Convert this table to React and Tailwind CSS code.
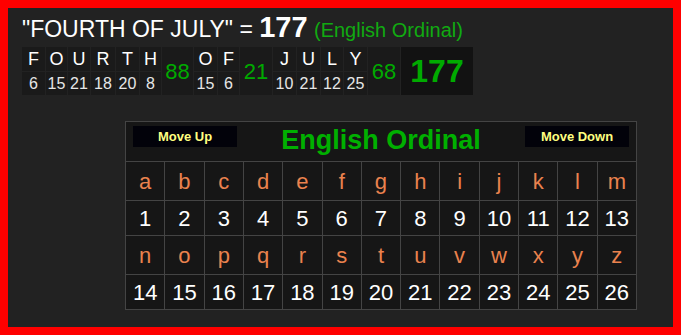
const font = { fontFamily: '"Liberation Sans", Arial, sans-serif' };

const words = [
  { cells: [['F', 6, 23], ['O', 15, 21], ['U', 21, 22], ['R', 18, 24], ['T', 20, 23], ['H', 8, 21]], sum: 88, w: 31 },
  { cells: [['O', 15, 23], ['F', 6, 21]], sum: 21, w: 32 },
  { cells: [['J', 10, 23], ['U', 21, 23], ['L', 12, 22], ['Y', 25, 23]], sum: 68, w: 32 },
];

const rows = [
  'abcdefghijklm'.split(''),
  'nopqrstuvwxyz'.split(''),
];

function WordTable() {
  return (
    <div className="flex gap-px bg-[#222]">
      {words.map((wd, i) => (
        <div key={i} className="flex gap-px">
          {wd.cells.map(([l, n, w], j) => (
            <div key={j} className="flex flex-col gap-px" style={{ width: w }}>
              <div className="h-[24px] bg-[#1a1a1a] text-white text-[18px] leading-[24px] text-center">{l}</div>
              <div className="h-[23px] bg-[#1a1a1a] text-[#e6e6e6] text-[16px] leading-[23px] text-center">{n}</div>
            </div>
          ))}
          <div className="h-[48px] bg-[#1a1a1a] text-[#00aa00] text-[22px] flex items-center justify-center" style={{ width: wd.w }}>{wd.sum}</div>
        </div>
      ))}
      <div className="w-[72px] h-[48px] bg-[#121212] text-[#00aa00] text-[32px] font-bold flex items-center justify-center">177</div>
    </div>
  );
}

function Chart() {
  return (
    <div className="w-[512px] border border-[#444] bg-[#161616] ml-[103px] mt-[26px]">
      <div className="h-[40px] flex items-start justify-between px-[7px] pt-[4px] border-b border-[#444]">
        <button className="w-[104px] h-[21px] bg-[#02020a] text-[#ffff80] text-[13px] font-bold">Move Up</button>
        <div className="text-[#00b000] text-[27px] font-bold leading-[30px] -mt-[1px]">English Ordinal</div>
        <button className="w-[104px] h-[21px] bg-[#02020a] text-[#ffff80] text-[13px] font-bold">Move Down</button>
      </div>
      {rows.map((r, ri) => (
        <div key={ri} className={ri === 0 ? 'border-b border-[#444]' : ''}>
          <div className="grid grid-cols-13 gap-px bg-[#444] border-b border-[#444]">
            {r.map((c) => (
              <div key={c} className="h-[38px] bg-[#161616] text-[#ea824e] text-[22px] flex items-center justify-center">{c}</div>
            ))}
          </div>
          <div className="grid grid-cols-13 gap-px bg-[#444]">
            {r.map((c, i) => (
              <div key={c} className="h-[34px] bg-[#161616] text-white text-[22px] flex items-center justify-center">{ri * 13 + i + 1}</div>
            ))}
          </div>
        </div>
      ))}
    </div>
  );
}

export default function App() {
  return (
    <div style={font} className="w-[681px] h-[335px] border-8 border-[#ff0000] bg-[#222] pl-[14px] overflow-hidden">
      <div className="h-[39px] pt-[5px] text-white text-[23px] leading-[28px] whitespace-nowrap">
        "FOURTH OF JULY" = <span className="text-[29px] font-bold">177</span>{' '}
        <span className="text-[#11aa11] text-[20px]">(English Ordinal)</span>
      </div>
      <WordTable />
      <Chart />
    </div>
  );
}
